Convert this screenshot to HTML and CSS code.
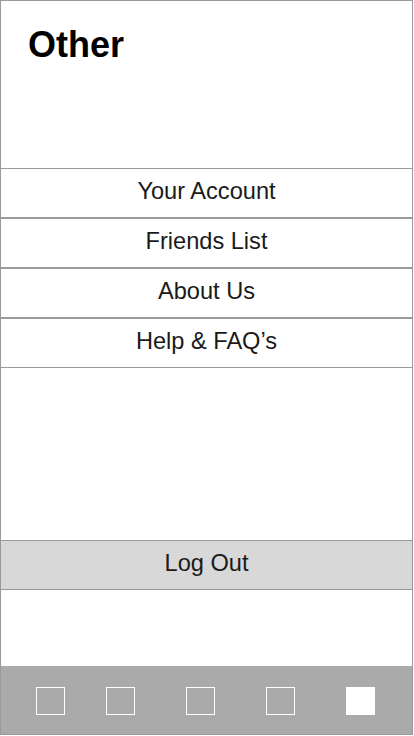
FILE: index.html
```html
<!DOCTYPE html>
<html lang="en">
<head>
<meta charset="utf-8">
<title>Other</title>
<link rel="stylesheet" href="styles.css">
</head>
<body>
<div class="screen">
  <header class="header">
    <h1 class="title">Other</h1>
  </header>
  <nav class="menu">
    <div class="row">Your Account</div>
    <div class="row">Friends List</div>
    <div class="row">About Us</div>
    <div class="row">Help &amp; FAQ’s</div>
  </nav>
  <div class="spacer"></div>
  <div class="row logout">Log Out</div>
  <div class="bottom-space"></div>
  <footer class="tabbar">
    <span class="tab tab-first"></span>
    <span class="tab"></span>
    <span class="tab"></span>
    <span class="tab"></span>
    <span class="tab tab-active"></span>
  </footer>
</div>
</body>
</html>
```
FILE: styles.css
```css
* { box-sizing: border-box; }
html, body { margin: 0; padding: 0; background: #fff; }
body { font-family: "Liberation Sans", Arial, sans-serif; color: #1a1a1a; }

.screen {
  width: 413px;
  height: 735px;
  border: 1px solid #9a9a9a;
  display: flex;
  flex-direction: column;
  background: #fff;
}

.header {
  height: 167px;
  flex: none;
  padding: 23px 0 0 27px;
}
.title {
  margin: 0;
  font-size: 36px;
  font-weight: 700;
  color: #000;
  line-height: 41px;
}

.menu { display: flex; flex-direction: column; flex: none; }

.row {
  height: 50px;
  flex: none;
  border-top: 1px solid #9a9a9a;
  border-bottom: 1px solid #9a9a9a;
  display: flex;
  align-items: center;
  justify-content: center;
  font-size: 23.6px;
  color: #1a1a1a;
  padding-bottom: 3px;
}

.spacer { flex: 1; }

.logout { background: #d8d8d8; }

.bottom-space { height: 76px; flex: none; }

.tabbar {
  height: 68px;
  flex: none;
  background: #aaaaaa;
  display: flex;
  align-items: flex-start;
  padding: 21px 0 0 35px;
  gap: 51px;
}
.tab {
  width: 29px;
  height: 28px;
  border: 1px solid #fff;
  flex: none;
}
.tab-first { margin-right: -10px; }
.tab-active { background: #fff; }
```
